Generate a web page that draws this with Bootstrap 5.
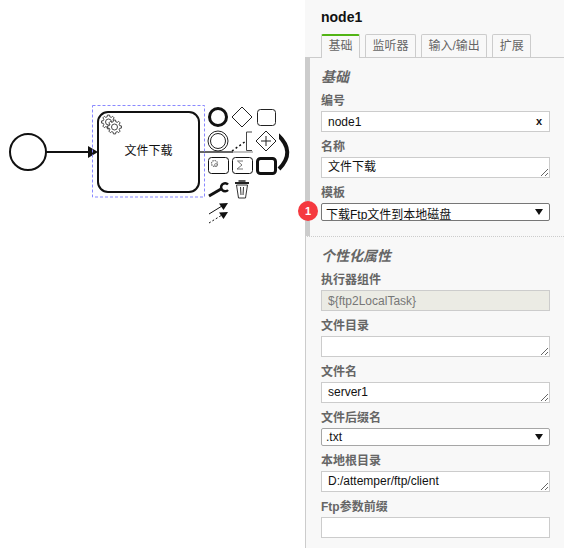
<!DOCTYPE html>
<html lang="zh-CN">
<head>
  <meta charset="UTF-8" />
  <meta name="viewport" content="width=device-width, initial-scale=1.0"/>
  <title>node1</title>
  <link href="https://cdn.jsdelivr.net/npm/bootstrap@5.3.2/dist/css/bootstrap.min.css" rel="stylesheet" />
  <style>
    html, body {
      height: 548px;
      overflow: hidden;
    }
    body {
      background: #fff;
      font-family: "Liberation Sans", "Noto Sans CJK SC", sans-serif;
      font-size: 12px;
      color: #333;
    }
    .canvas-area {
      width: 305px;
      flex: none;
    }
    .canvas-area svg {
      display: block;
    }
    .canvas-area text {
      font-family: "Liberation Sans", "Noto Sans CJK SC", sans-serif;
      font-size: 12px;
      fill: #111;
    }
    .side-panel {
      width: 259px;
      flex: none;
      background: #f8f8f8;
      height: 548px;
    }
    .panel-title {
      font-size: 14px;
      line-height: 16px;
      font-weight: 700;
      color: #111;
      padding: 9px 0 0 16px;
      height: 34px;
      margin: 0;
    }
    .tab-row {
      padding-left: 16px;
      gap: 5px;
      height: 24px;
      border-bottom: 1px solid #ccc;
    }
    .tab-item {
      height: 23px;
      padding: 1px 6.5px 0;
      line-height: 21px;
      font-size: 12px;
      color: #666;
      border: 1px solid #ccc;
      border-bottom: 0;
      border-radius: 2px 2px 0 0;
      background: #f8f8f8;
    }
    .tab-item.is-current {
      height: 24px;
      border-top: 2px solid #52b415;
      padding-top: 0;
      width: 39px;
      text-align: center;
    }
    .group-one {
      border-left: 5px solid #ccc;
      height: 178px;
      padding: 9px 14px 0 11px;
    }
    .group-two {
      border-left: 1px solid #ccc;
      border-top: 1px dotted #ccc;
      padding: 9px 14px 0 15px;
      height: 312px;
    }
    .group-name {
      font-size: 14px;
      line-height: 20px;
      font-weight: 700;
      font-style: italic;
      color: #666;
      margin-bottom: 4px;
    }
    .field-label {
      display: block;
      font-size: 12px;
      line-height: 18px;
      padding: 1px 0;
      font-weight: 700;
      color: #666;
      margin: 0;
    }
    .field-gap {
      margin-bottom: 5px;
    }
    .side-panel .form-control {
      width: 229px;
      height: 21px;
      min-height: 21px;
      padding: 0 6px;
      font-size: 12px;
      line-height: 18px;
      color: #111;
      background: #fff;
      border: 1px solid #ccc;
      border-radius: 0;
      display: block;
    }
    .side-panel textarea.form-control {
      resize: both;
      overflow: hidden;
    }
    .side-panel .form-control:disabled {
      background: #ebebe4;
      color: #777;
      opacity: 1;
    }
    .clear-wrap {
      width: 229px;
    }
    .clear-mark {
      position: absolute;
      right: 8px;
      top: 1px;
      font-size: 11px;
      line-height: 18px;
      font-weight: 700;
      color: #111;
    }
    .side-panel .form-select {
      width: 229px;
      height: 18px;
      padding: 0 20px 0 4px;
      font-size: 12px;
      line-height: 16px;
      color: #111;
      border: 1px solid #777;
      border-radius: 2px;
      background-color: #fff;
      background-image: url("data:image/svg+xml,%3Csvg xmlns='http://www.w3.org/2000/svg' width='8' height='6'%3E%3Cpath d='M0 0h8L4 6z' fill='%23111'/%3E%3C/svg%3E");
      background-position: right 6px center;
      background-size: 8px 6px;
    }
    .side-panel .form-select.select-soft {
      border-color: #a6a6a6;
    }
    .side-panel .form-select.select-low {
      padding-top: 3px;
    }
    .num-pin {
      position: absolute;
      left: -23px;
      top: -2px;
      width: 20px;
      height: 20px;
      border-radius: 50%;
      background: #f5393f;
      color: #fff;
      font-size: 11px;
      font-weight: 700;
      line-height: 20px;
      text-align: center;
    }
  </style>
</head>
<body>
  <div class="d-flex">
    <div class="canvas-area">
      <svg width="305" height="548" viewBox="0 0 305 548">
        <defs>
          <g id="gear">
            <polygon fill="#fff" stroke="#333" stroke-width=".9" points="5.24,-1.31 6.91,-1.1 6.91,1.1 5.24,1.31 4.63,2.78 5.66,4.11 4.11,5.66 2.78,4.63 1.31,5.24 1.1,6.91 -1.1,6.91 -1.31,5.24 -2.78,4.63 -4.11,5.66 -5.66,4.11 -4.63,2.78 -5.24,1.31 -6.91,1.1 -6.91,-1.1 -5.24,-1.31 -4.63,-2.78 -5.66,-4.11 -4.11,-5.66 -2.78,-4.63 -1.31,-5.24 -1.1,-6.91 1.1,-6.91 1.31,-5.24 2.78,-4.63 4.11,-5.66 5.66,-4.11 4.63,-2.78"/>
            <circle r="3" fill="#fff" stroke="#333" stroke-width=".9"/>
          </g>
        </defs>

        <!-- start event + flow -->
        <circle cx="28" cy="152" r="18" fill="#fff" stroke="#111" stroke-width="2"/>
        <path d="M46 152H90" stroke="#111" stroke-width="2" fill="none"/>
        <path d="M88 146L98 152L88 158z" fill="#111"/>
        <path d="M199 152H233" stroke="#333" stroke-width="1.5" fill="none"/>
        <path d="M233 152H258" stroke="#aaa" stroke-width="1.5" fill="none"/>

        <!-- service task -->
        <rect x="98" y="112" width="101" height="80" rx="10" fill="#fff" stroke="#111" stroke-width="2"/>
        <text x="148.500" y="155" text-anchor="middle">文件下载</text>
        <use href="#gear" x="108.500" y="122"/>
        <use href="#gear" x="114.500" y="127"/>
        <rect x="92.500" y="105.500" width="112" height="91.500" fill="none" stroke="#8888ff" stroke-dasharray="3 2"/>

        <!-- context pad -->
        <path d="M278 135Q296 152 279 169" fill="none" stroke="#111" stroke-width="4"/>
        <circle cx="218" cy="117" r="8.500" fill="#fff" stroke="#111" stroke-width="3"/>
        <path d="M242 107L252 117L242 127L232 117z" fill="#fff" stroke="#222" stroke-width="1"/>
        <rect x="257.500" y="109.500" width="18" height="16" rx="3" fill="#fff" stroke="#222"/>
        <circle cx="218" cy="141" r="10" fill="#fff" stroke="#222"/>
        <circle cx="218" cy="141" r="7.500" fill="#fff" stroke="#222"/>
        <path d="M232 151L246 141" stroke="#111" stroke-width="1.500" stroke-dasharray="2 2.500" fill="none"/>
        <path d="M252 132H246.500V150.500H252" stroke="#444" fill="none"/>
        <rect x="253" y="129" width="26" height="25" fill="#fff"/>
        <path d="M266 131L276 141L266 151L256 141z" fill="#fff" stroke="#222"/>
        <path d="M266 136V146M261 141H271" stroke="#222"/>
        <rect x="208.500" y="157.500" width="20" height="16" rx="3" fill="#fff" stroke="#111"/>
        <circle cx="214.500" cy="163.500" r="3" fill="none" stroke="#777" stroke-dasharray="1.500 .8" stroke-width="1.200"/>
        <circle cx="216" cy="165" r="1.500" fill="none" stroke="#777" stroke-width=".8"/>
        <rect x="232.500" y="157.500" width="20" height="16" rx="3" fill="#fff" stroke="#111"/>
        <path d="M243 161H237.500L242 165L237 169H243" fill="none" stroke="#777"/>
        <rect x="257.500" y="158.500" width="18" height="15" rx="3" fill="#fff" stroke="#111" stroke-width="3"/>

        <!-- wrench -->
        <path d="M209 196L221 189" stroke="#111" stroke-width="3" fill="none"/>
        <path d="M228 184.500A4 4 0 1 0 228 190" stroke="#111" stroke-width="2.500" fill="none"/>
        <!-- trash -->
        <path d="M235 183H249" stroke="#222" stroke-width="2" fill="none"/>
        <path d="M238.500 181H245.500" stroke="#222" stroke-width="1.500" fill="none"/>
        <path d="M236.500 185L238.500 198H245.500L247.500 185z" fill="#fff" stroke="#333"/>
        <path d="M240.500 187L241 195M243.500 187L243 195" stroke="#333" fill="none"/>
        <!-- connect arrows -->
        <path d="M209 214L222 206" stroke="#111" fill="none"/>
        <path d="M219 203.500L228 203L223.500 210z" fill="#111"/>
        <path d="M209 223L222 215" stroke="#111" stroke-dasharray="2 2" fill="none"/>
        <path d="M219 212.500L228 212L223.500 219z" fill="#111"/>
      </svg>
    </div>

    <div class="side-panel">
      <h1 class="panel-title">node1</h1>
      <div class="tab-row d-flex align-items-start">
        <div class="tab-item is-current">基础</div>
        <div class="tab-item">监听器</div>
        <div class="tab-item">输入/输出</div>
        <div class="tab-item">扩展</div>
      </div>

      <div class="group-one">
        <div class="group-name">基础</div>
        <label class="field-label">编号</label>
        <div class="position-relative clear-wrap field-gap">
          <input class="form-control" type="text" value="node1" />
          <span class="clear-mark">x</span>
        </div>
        <label class="field-label">名称</label>
        <textarea class="form-control field-gap" rows="1">文件下载</textarea>
        <label class="field-label">模板</label>
        <div class="position-relative">
          <select class="form-select select-low">
            <option>下载Ftp文件到本地磁盘</option>
          </select>
          <span class="num-pin">1</span>
        </div>
      </div>

      <div class="group-two">
        <div class="group-name">个性化属性</div>
        <label class="field-label">执行器组件</label>
        <input class="form-control field-gap" type="text" value="${ftp2LocalTask}" disabled />
        <label class="field-label">文件目录</label>
        <textarea class="form-control field-gap" rows="1"></textarea>
        <label class="field-label">文件名</label>
        <textarea class="form-control field-gap" rows="1">server1</textarea>
        <label class="field-label">文件后缀名</label>
        <select class="form-select select-soft field-gap">
          <option>.txt</option>
        </select>
        <label class="field-label">本地根目录</label>
        <textarea class="form-control field-gap" rows="1">D:/attemper/ftp/client</textarea>
        <label class="field-label">Ftp参数前缀</label>
        <input class="form-control" type="text" />
      </div>
    </div>
  </div>
  <script src="https://cdn.jsdelivr.net/npm/bootstrap@5.3.2/dist/js/bootstrap.bundle.min.js"></script>
</body>
</html>
